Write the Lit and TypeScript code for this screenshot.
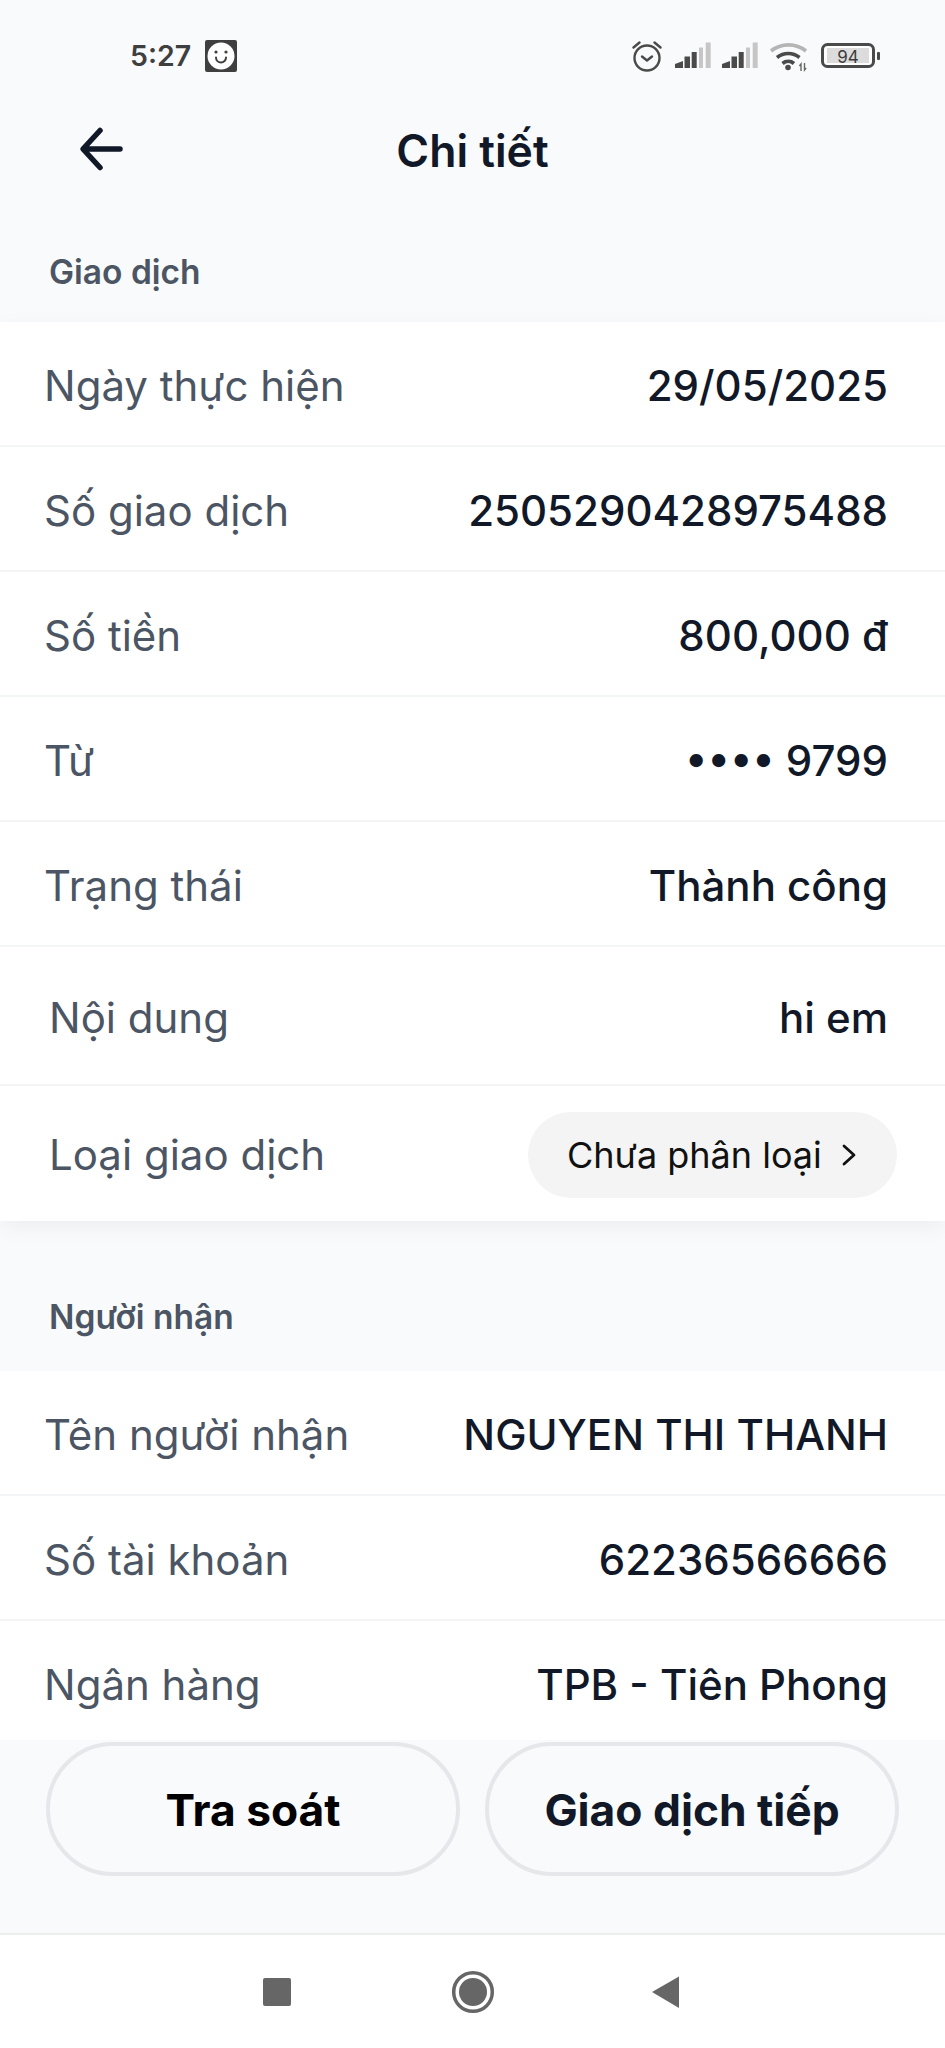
import { LitElement, html, svg, css } from "lit";
import { customElement } from "lit/decorators.js";

const section1: [string, string][] = [
  ["Ngày thực hiện", "29/05/2025"],
  ["Số giao dịch", "2505290428975488"],
  ["Số tiền", "800,000 đ"],
  ["Từ", "•••• 9799"],
  ["Trạng thái", "Thành công"],
];
const section2: [string, string][] = [
  ["Tên người nhận", "NGUYEN THI THANH"],
  ["Số tài khoản", "62236566666"],
  ["Ngân hàng", "TPB - Tiên Phong"],
];

@customElement("app-root")
export class AppRoot extends LitElement {
  static styles = css`
    :host { display: block; width: 945px; height: 2048px; font-family: Inter, "Noto Sans", sans-serif; color: #111827; background: #f9fafb; overflow: hidden; }
    .page { display: flex; flex-direction: column; height: 2048px; }
    .status { height: 88px; flex: none; box-sizing: border-box; display: flex; align-items: flex-start; justify-content: space-between; padding: 40px 65px 0 130px; }
    .status-left { display: flex; align-items: center; gap: 14px; }
    .time { font-size: 28.5px; font-weight: 600; color: #3f3f3f; line-height: 32px; }
    .status svg { display: block; }
    .nav { height: 124px; flex: none; position: relative; display: flex; align-items: center; justify-content: center; }
    .nav svg { position: absolute; left: 78px; top: 38px; }
    .title { font-size: 44.5px; font-weight: 600; color: #111827; line-height: 50px; margin-top: 2px; }
    .content { flex: 1; min-height: 0; overflow: hidden; }
    .sec-title { box-sizing: border-box; padding: 0 49px; display: flex; align-items: center; font-size: 33.5px; font-weight: 600; color: #4b5563; }
    .first { height: 110px; padding-top: 10px; }
    .second { height: 150px; padding-top: 42px; }
    .card { background: #fff; }
    .card.shadow { box-shadow: 0 6px 20px rgba(17, 24, 39, 0.05); position: relative; }
    .row { display: flex; justify-content: space-between; align-items: center; height: 125px; box-sizing: border-box; border-bottom: 2px solid #f4f5f6; padding: 4px 57px 0 44px; font-size: 42px; }
    .row .l { color: #4b5563; }
    .row .v { color: #111827; font-weight: 450; }
    .row.tall { height: 139px; padding-left: 49px; }
    .row.last { height: 135px; border-bottom: none; padding: 2px 48px 0 49px; }
    .chip { height: 86px; width: 369px; box-sizing: border-box; border-radius: 43px; background: #f4f4f4; display: flex; align-items: center; padding-left: 39px; gap: 20px; font-size: 36px; color: #111; }
    .actions { flex: none; height: 193px; box-sizing: border-box; padding: 2px 46px 0; display: grid; grid-template-columns: 414px 414px; column-gap: 25px; align-content: start; background: #f9fafb; }
    .btn { height: 134px; box-sizing: border-box; border: 4px solid #e5e7eb; border-radius: 67px; display: flex; align-items: center; justify-content: center; padding-top: 2px; font-size: 44.3px; font-weight: 700; background: #f9fafb; }
    .btn.a { color: #000; }
    .btn.b { color: #111827; }
    .sysnav { flex: none; height: 115px; background: #fff; border-top: 2px solid #eceded; box-sizing: border-box; display: flex; align-items: center; justify-content: center; padding-right: 3px; }
    .sysnav svg { display: block; }
  `;

  private row([l, v]: [string, string]) {
    return html`<div class="row"><span class="l">${l}</span><span class="v">${v}</span></div>`;
  }

  private signal(x: number) {
    return svg`<g transform="translate(${x} 0)">
      <path d="M0 28v-4l8-3v7z" fill="#4a4a4a"></path>
      <rect x="9.5" y="16.5" width="5.5" height="11.5" fill="#4a4a4a"></rect>
      <rect x="16.7" y="12" width="5" height="16" fill="#4a4a4a"></rect>
      <rect x="24" y="7.5" width="4" height="20.5" fill="#c6c6c6"></rect>
      <rect x="30.7" y="2.5" width="5" height="25.5" fill="#c6c6c6"></rect>
    </g>`;
  }

  private statusIcons() {
    return html`<svg width="248" height="34" viewBox="0 0 248 34">
      <g fill="none" stroke="#4a4a4a" stroke-width="2.4" stroke-linecap="round" stroke-linejoin="round">
        <circle cx="15" cy="18" r="12.5"></circle>
        <path d="M10 16.5l5 4 5-4"></path>
        <path d="M1.5 7.5L7.5 2.5M28.5 7.5L22.5 2.5"></path>
      </g>
      ${this.signal(43)}
      ${this.signal(90)}
      <g fill="none">
        <path d="M139 11a28 28 0 0 1 35 0" stroke="#b5b5b5" stroke-width="3.6"></path>
        <path d="M145 17.5a18 18 0 0 1 22.5 0" stroke="#4a4a4a" stroke-width="3.6"></path>
        <path d="M150.5 23.5a9 9 0 0 1 11.5 0" stroke="#4a4a4a" stroke-width="3.6"></path>
      </g>
      <circle cx="156" cy="27.5" r="2.8" fill="#4a4a4a"></circle>
      <path d="M169 31v-7l-1.6 2M172.5 23v7l1.6-2" fill="none" stroke="#666" stroke-width="1.4"></path>
      <rect x="190.5" y="4.5" width="51" height="22" rx="5" fill="#fff" stroke="#4a4a4a" stroke-width="3"></rect>
      <rect x="195" y="8" width="42" height="15" fill="#dcdcdc"></rect>
      <rect x="245" y="12" width="3" height="8" rx="1" fill="#4a4a4a"></rect>
      <text x="216" y="22.5" font-size="17" text-anchor="middle" fill="#3c3c3c" font-family="Inter, sans-serif">94</text>
    </svg>`;
  }

  render() {
    return html`<div class="page">
      <div class="status">
        <div class="status-left">
          <span class="time">5:27</span>
          <svg width="32" height="32" viewBox="0 0 32 32">
            <rect width="32" height="32" rx="2" fill="#3f3f3f"></rect>
            <circle cx="16" cy="16" r="13.5" fill="#fff"></circle>
            <circle cx="11" cy="12" r="1.6" fill="#3f3f3f"></circle>
            <circle cx="21" cy="12" r="1.6" fill="#3f3f3f"></circle>
            <path d="M11 17.5a5 5 0 0 0 10 0" fill="none" stroke="#3f3f3f" stroke-width="2" stroke-linecap="round"></path>
          </svg>
        </div>
        ${this.statusIcons()}
      </div>
      <div class="nav">
        <svg width="46" height="46" viewBox="0 0 46 46" fill="none" stroke="#111827" stroke-width="5.5" stroke-linecap="round" stroke-linejoin="round">
          <path d="M42 23H6M22 4.5L5 23l17 18.5"></path>
        </svg>
        <span class="title">Chi tiết</span>
      </div>
      <div class="content">
        <div class="sec-title first">Giao dịch</div>
        <div class="card shadow">
          ${section1.map((r) => this.row(r))}
          <div class="row tall"><span class="l">Nội dung</span><span class="v">hi em</span></div>
          <div class="row last">
            <span class="l">Loại giao dịch</span>
            <span class="chip">Chưa phân loại
              <svg width="14" height="24" viewBox="0 0 14 24" fill="none" stroke="#111" stroke-width="2.8" stroke-linecap="round" stroke-linejoin="round"><path d="M2 3l10 9-10 9"></path></svg>
            </span>
          </div>
        </div>
        <div class="sec-title second">Người nhận</div>
        <div class="card">${section2.map((r) => this.row(r))}</div>
      </div>
      <div class="actions">
        <div class="btn a">Tra soát</div>
        <div class="btn b">Giao dịch tiếp</div>
      </div>
      <div class="sysnav">
        <svg width="416" height="44" viewBox="0 0 416 44">
          <rect x="0" y="8" width="28" height="28" rx="2" fill="#666"></rect>
          <circle cx="210" cy="22" r="19.3" fill="none" stroke="#666" stroke-width="3.5"></circle>
          <circle cx="210" cy="22" r="14" fill="#666"></circle>
          <path d="M389 22L416 6.5V38z" fill="#666"></path>
        </svg>
      </div>
    </div>`;
  }
}
